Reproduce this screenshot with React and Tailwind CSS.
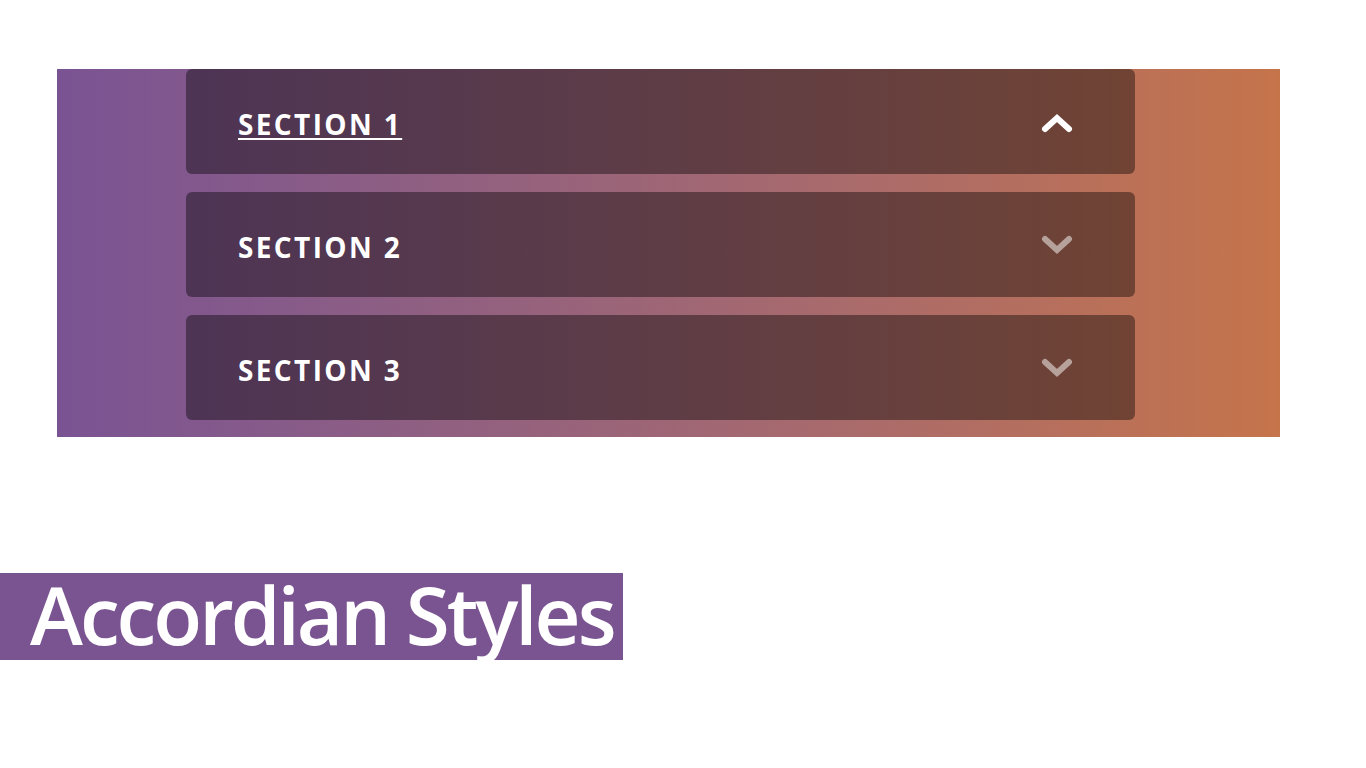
const sections = [
  { title: "SECTION 1", open: true },
  { title: "SECTION 2", open: false },
  { title: "SECTION 3", open: false },
];

const Chevron = ({ up }) => (
  <svg width="32" height="20" viewBox="0 0 32 20" className={up ? "text-white" : "text-white/50"}>
    <polyline
      points={up ? "4,16 16,5 28,16" : "4,4 16,15 28,4"}
      fill="none"
      stroke="currentColor"
      strokeWidth="6"
      strokeLinecap="round"
      strokeLinejoin="miter"
    />
  </svg>
);

const App = () => {
  return (
    <div className="min-h-[768px] bg-white" style={{ fontFamily: "'Open Sans', sans-serif" }}>
      <div className="pt-[69px] pl-[57px]">
        <div className="w-[1223px] h-[368px] bg-gradient-to-r from-[#7a5393] to-[#c5744a]">
          <div className="ml-[129px] w-[949px] flex flex-col gap-[18px]">
            {sections.map((s) => (
              <div
                key={s.title}
                className="h-[105px] rounded-[6px] bg-black/40 flex items-center justify-between pl-[52px] pr-[62px]"
              >
                <span
                  className={
                    "text-white font-bold text-[28px] tracking-[0.085em] pt-[4px] " +
                    (s.open ? "underline decoration-2 underline-offset-[3px]" : "")
                  }
                >
                  {s.title}
                </span>
                <span className={s.open ? "pt-[2px]" : "pt-[0px]"}>
                  <Chevron up={s.open} />
                </span>
              </div>
            ))}
          </div>
        </div>
      </div>
      <div className="mt-[136px] w-[623px] h-[87px] bg-[#7a5391] flex items-center pl-[30px]">
        <span className="text-white font-semibold text-[80px] leading-none tracking-[-0.0375em] pb-[6px]">
          Accordian Styles
        </span>
      </div>
    </div>
  );
};

export default App;
